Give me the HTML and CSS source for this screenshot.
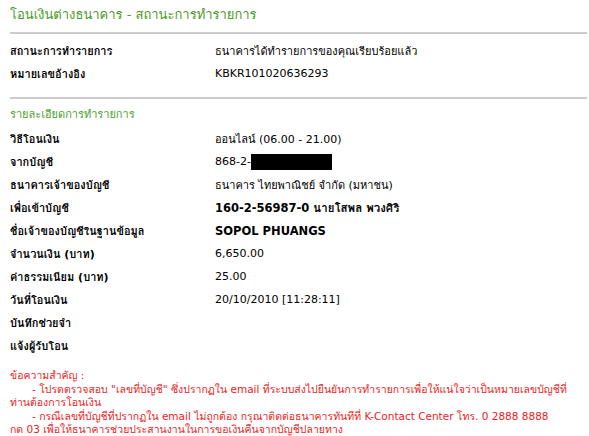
FILE: index.html
```html
<!DOCTYPE html>
<html lang="th">
<head>
<meta charset="utf-8">
<title>โอนเงินต่างธนาคาร - สถานะการทำรายการ</title>
<link rel="stylesheet" href="styles.css">
</head>
<body>
<div class="page">
  <h1 class="title">โอนเงินต่างธนาคาร - สถานะการทำรายการ</h1>
  <hr class="rule">
  <div class="grid">
    <div class="label">สถานะการทำรายการ</div><div class="value">ธนาคารได้ทำรายการของคุณเรียบร้อยแล้ว</div>
    <div class="label">หมายเลขอ้างอิง</div><div class="value">KBKR101020636293</div>
  </div>
  <hr class="rule">
  <div class="section">รายละเอียดการทำรายการ</div>
  <div class="grid">
    <div class="label">วิธีโอนเงิน</div><div class="value">ออนไลน์ (06.00 - 21.00)</div>
    <div class="label">จากบัญชี</div><div class="value">868-2-<span class="redact"></span></div>
    <div class="label">ธนาคารเจ้าของบัญชี</div><div class="value">ธนาคาร ไทยพาณิชย์ จำกัด (มหาชน)</div>
    <div class="label">เพื่อเข้าบัญชี</div><div class="value strong">160-2-56987-0 นายโสพล พวงศิริ</div>
    <div class="label">ชื่อเจ้าของบัญชีในฐานข้อมูล</div><div class="value strong">SOPOL PHUANGS</div>
    <div class="label">จำนวนเงิน (บาท)</div><div class="value">6,650.00</div>
    <div class="label">ค่าธรรมเนียม (บาท)</div><div class="value">25.00</div>
    <div class="label">วันที่โอนเงิน</div><div class="value">20/10/2010 [11:28:11]</div>
    <div class="label">บันทึกช่วยจำ</div><div class="value"></div>
    <div class="label">แจ้งผู้รับโอน</div><div class="value"></div>
  </div>
  <div class="notice">
    <div>ข้อความสำคัญ :</div>
    <div class="item">- โปรดตรวจสอบ "เลขที่บัญชี" ซึ่งปรากฏใน email ที่ระบบส่งไปยืนยันการทำรายการเพื่อให้แน่ใจว่าเป็นหมายเลขบัญชีที่<br>ท่านต้องการโอนเงิน</div>
    <div class="item">- กรณีเลขที่บัญชีที่ปรากฏใน email ไม่ถูกต้อง กรุณาติดต่อธนาคารทันทีที่ K-Contact Center โทร. 0 2888 8888<br>กด 03 เพื่อให้ธนาคารช่วยประสานงานในการขอเงินคืนจากบัญชีปลายทาง</div>
  </div>
</div>
</body>
</html>
```
FILE: styles.css
```css
html, body {
  margin: 0;
  padding: 0;
  background: #ffffff;
}
body {
  font-family: "DejaVu Sans", "Loma", sans-serif;
  font-size: 11px;
  color: #000;
}
.page {
  padding: 5px 2px 0 10px;
}
.title {
  margin: 0;
  font-size: 13px;
  font-weight: normal;
  color: #4b9a29;
  line-height: 20px;
}
.rule {
  margin: 7px 0 0 0;
  border: 0;
  height: 2px;
  background: #cccccc;
}
.grid {
  display: grid;
  grid-template-columns: 205px 1fr;
  grid-auto-rows: 23px;
  align-items: center;
  padding: 5px 0;
}
.label {
  font-weight: bold;
}
.value.strong {
  font-weight: bold;
  font-size: 11.5px;
}
.redact {
  display: inline-block;
  width: 81px;
  height: 16px;
  background: #000;
  vertical-align: middle;
}
.section {
  color: #4ca02b;
  margin-top: 9px;
  line-height: 14px;
}
.notice {
  color: #ec1c24;
  font-size: 10.5px;
  line-height: 13.5px;
  margin-top: 7px;
  white-space: nowrap;
}
.notice .item {
  text-indent: 22px;
}
```
